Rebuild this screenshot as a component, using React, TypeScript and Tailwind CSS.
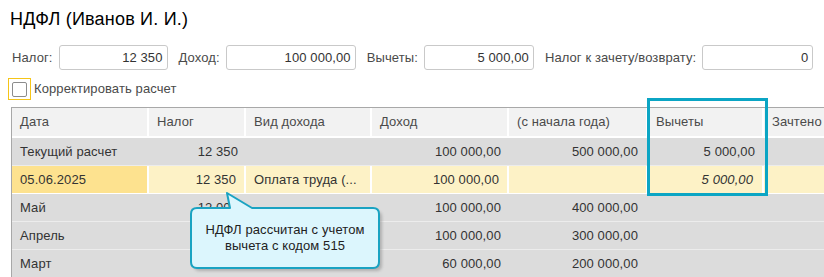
import React from "react";

const cols = "grid grid-cols-[137px_97px_126px_137px_139px_116px_1fr]";

type Row = {
  date: string;
  tax?: string;
  kind?: string;
  income?: string;
  ytd?: string;
  ded?: string;
  current?: boolean;
};

const rows: Row[] = [
  { date: "Текущий расчет", tax: "12 350", income: "100 000,00", ytd: "500 000,00", ded: "5 000,00" },
  { date: "05.06.2025", tax: "12 350", kind: "Оплата труда (...", income: "100 000,00", ded: "5 000,00", current: true },
  { date: "Май", tax: "12 000", income: "100 000,00", ytd: "400 000,00" },
  { date: "Апрель", tax: "12 000", income: "100 000,00", ytd: "300 000,00" },
  { date: "Март", tax: "7 800", income: "60 000,00", ytd: "200 000,00" },
];

function Field({ label, value, width }: { label: string; value: string; width: string }) {
  return (
    <div className="flex items-center shrink-0 mr-[11px]">
      <span className="mr-[6px] whitespace-nowrap text-[#4a4a4a]">{label}</span>
      <div className={`${width} shrink-0 h-[25px] rounded-[3px] border border-[#c9c9c9] bg-white flex items-center justify-end pr-[4px] text-[#333]`}>
        {value}
      </div>
    </div>
  );
}

export default function App() {
  return (
    <div
      className="relative w-[824px] h-[277px] overflow-hidden bg-white text-[13px] leading-[16px] tracking-[0.1px]"
      style={{ fontFamily: '"Liberation Sans", Arial, sans-serif' }}
    >
      <div className="pt-[9px] pl-[10px] text-[18px] leading-[20px] tracking-[0.2px] text-black">НДФЛ (Иванов И. И.)</div>

      <div className="flex items-center pl-[12px] mt-[16px] whitespace-nowrap">
        <Field label="Налог:" value="12 350" width="w-[109px]" />
        <Field label="Доход:" value="100 000,00" width="w-[130px]" />
        <Field label="Вычеты:" value="5 000,00" width="w-[110px]" />
        <Field label="Налог к зачету/возврату:" value="0" width="w-[111px]" />
      </div>

      <div className="flex items-center pl-[8px] mt-[8px] h-[22px]">
        <div className="w-[23px] h-[22px] border border-[#f5c518] flex items-center justify-center">
          <div className="w-[15px] h-[15px] border border-[#8c8c8c] rounded-[2px] bg-white" />
        </div>
        <span className="ml-[3px] text-[#4a4a4a]">Корректировать расчет</span>
      </div>

      <div className="ml-[11px] mt-[7px] border-l border-t border-[#a8a8a8] text-[#333]">
        <div className={`${cols} h-[30px] bg-[#f2f2f2] text-[#4a4a4a]`}>
          {["Дата", "Налог", "Вид дохода", "Доход", "(с начала года)", "Вычеты", "Зачтено"].map((h) => (
            <div key={h} className="flex items-center px-[8px] border-r-2 border-b-2 border-white whitespace-nowrap">
              {h}
            </div>
          ))}
        </div>
        {rows.map((r) => {
          const cell = r.current ? "border-r-2 border-white" : "";
          return (
            <div
              key={r.date}
              className={`${cols} h-[28px] border-b ${r.current ? "bg-[#fdf2c6] border-white" : "bg-[#dcdcdc] border-[#ececec]"}`}
            >
              <div className={`flex items-center px-[8px] ${cell} ${r.current ? "bg-[#fde28f]" : ""}`}>{r.date}</div>
              <div className={`flex items-center justify-end px-[8px] ${cell}`}>{r.tax}</div>
              <div className={`flex items-center px-[8px] ${cell}`}>{r.kind}</div>
              <div className={`flex items-center justify-end px-[8px] ${cell}`}>{r.income}</div>
              <div className={`flex items-center justify-end px-[10px] ${cell}`}>{r.ytd}</div>
              <div className={`flex items-center justify-end px-[9px] ${cell} ${r.current ? "italic" : ""}`}>{r.ded}</div>
              <div />
            </div>
          );
        })}
      </div>

      <div className="absolute left-[647px] top-[98px] w-[121px] h-[98px] border-[3px] border-[#0ba5c4]" />

      <svg className="absolute left-[184px] top-[188px]" width="204" height="89" viewBox="0 0 204 89">
        <defs>
          <filter id="sh" x="-10%" y="-10%" width="130%" height="140%">
            <feGaussianBlur stdDeviation="1.5" />
          </filter>
        </defs>
        <path
          d="M13 20 L46 20 L43 5 L68 20 L189 20 Q195 20 195 26 L195 74 Q195 80 189 80 L13 80 Q7 80 7 74 L7 26 Q7 20 13 20 Z"
          transform="translate(3 3)"
          fill="#8a8a8a"
          opacity="0.55"
          filter="url(#sh)"
        />
        <path
          d="M13 20 L46 20 L43 5 L68 20 L189 20 Q195 20 195 26 L195 74 Q195 80 189 80 L13 80 Q7 80 7 74 L7 26 Q7 20 13 20 Z"
          fill="#dcf6fd"
          stroke="#1aa3c2"
          strokeWidth="2"
          strokeLinejoin="round"
        />
      </svg>
      <div className="absolute left-[191px] top-[222px] w-[188px] text-center text-[#222] leading-[16px]">
        НДФЛ рассчитан с учетом
        <br />
        вычета с кодом 515
      </div>
    </div>
  );
}
